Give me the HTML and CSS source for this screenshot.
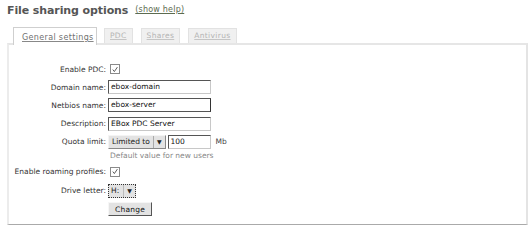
FILE: index.html
```html
<!DOCTYPE html>
<html>
<head>
<meta charset="utf-8">
<link rel="stylesheet" href="styles.css">
</head>
<body>
<div class="page">
  <div class="title-row">
    <h1 class="title">File sharing options</h1>
    <a class="help" href="#">(show help)</a>
  </div>
  <div class="tabs">
    <span class="tab active"><u>General settings</u></span>
    <span class="tab"><u>PDC</u></span>
    <span class="tab"><u>Shares</u></span>
    <span class="tab"><u>Antivirus</u></span>
  </div>
  <div class="panel">
    <div class="form">
      <div class="label r1">Enable PDC:</div>
      <div class="field r1"><span class="check"><svg viewBox="0 0 9 9" width="9" height="9"><path d="M2 4.6 L3.8 6.8 L7.2 1.8" fill="none" stroke="#333" stroke-width="0.9"/></svg></span></div>

      <div class="label r2">Domain name:</div>
      <div class="field r2"><span class="input">ebox-domain</span></div>

      <div class="label r3">Netbios name:</div>
      <div class="field r3"><span class="input dark">ebox-server</span></div>

      <div class="label r4">Description:</div>
      <div class="field r4"><span class="input">EBox PDC Server</span></div>

      <div class="label r5">Quota limit:</div>
      <div class="field r5">
        <span class="select"><span class="sel-text">Limited to</span><span class="sel-btn">▼</span></span>
        <span class="input small">100</span>
        <span class="unit">Mb</span>
      </div>

      <div class="label r6"></div>
      <div class="field r6"><span class="hint">Default value for new users</span></div>

      <div class="label r7">Enable roaming profiles:</div>
      <div class="field r7"><span class="check"><svg viewBox="0 0 9 9" width="9" height="9"><path d="M2 4.6 L3.8 6.8 L7.2 1.8" fill="none" stroke="#333" stroke-width="0.9"/></svg></span></div>

      <div class="label r8">Drive letter:</div>
      <div class="field r8"><span class="select focus"><span class="sel-text">H:</span><span class="sel-btn">▼</span></span></div>

      <div class="label r9"></div>
      <div class="field r9"><button class="btn" type="button">Change</button></div>
    </div>
  </div>
</div>
</body>
</html>
```

FILE: styles.css
```css
html, body {
  margin: 0;
  padding: 0;
  background: #ffffff;
}

.page {
  width: 530px;
  height: 252px;
  font-family: "DejaVu Sans", "Liberation Sans", sans-serif;
  color: #333;
}

.title-row {
  display: flex;
  align-items: baseline;
  padding: 3px 0 0 7px;
  height: 22px;
  box-sizing: border-box;
}

.title {
  margin: 0;
  font-size: 11px;
  font-weight: bold;
  color: #555;
  line-height: 16px;
  letter-spacing: -0.1px;
}

.help {
  margin-left: 7px;
  font-size: 8px;
  color: #5c6b50;
  text-decoration: underline;
  letter-spacing: 0.2px;
  position: relative;
  top: -2px;
}

.tabs {
  display: flex;
  align-items: flex-end;
  padding-left: 13px;
  margin-top: 5px;
  height: 16px;
  position: relative;
  z-index: 2;
}

.tab {
  box-sizing: border-box;
  height: 15px;
  margin-right: 8px;
  padding: 0 5px;
  font-size: 7.5px;
  letter-spacing: 0.35px;
  line-height: 14px;
  color: #b4b4b4;
  background: #f0f0f0;
  border: 1px solid #e2e2e2;
  border-bottom: none;
}

.tab u {
  text-decoration-color: #c4c4c4;
}

.tab.active {
  height: 18px;
  margin-bottom: -2px;
  width: 84px;
  padding: 0 0 0 8px;
  margin-right: 7px;
  background: #fff;
  border-color: #cfcfcf;
  color: #707070;
  font-size: 8px;
  line-height: 19px;
}

.tab.active u {
  text-decoration-color: #888;
}

.panel {
  box-sizing: border-box;
  margin-left: 7px;
  width: 521px;
  height: 182px;
  border-top: 2px solid #e6e6e6;
  border-left: 2px solid #ececec;
  border-right: 2px solid #e4e4e4;
  border-bottom: 1px solid #aaa;
  padding-top: 15px;
  position: relative;
  z-index: 1;
}

.form {
  display: grid;
  grid-template-columns: 97px auto;
  column-gap: 2px;
  grid-template-rows: 18px 18px 18.5px 18.5px 17px 11px 21px 17px 20px;
  font-size: 7.5px;
}

.label {
  display: flex;
  align-items: center;
  justify-content: flex-end;
  color: #333;
  white-space: nowrap;
}

.field {
  display: flex;
  align-items: center;
}

.check {
  box-sizing: border-box;
  width: 10px;
  height: 10px;
  margin-left: 2px;
  border: 1px solid #8a8a8a;
  background: #fff;
  display: flex;
  align-items: center;
  justify-content: center;
}

.check svg {
  display: block;
}

.input {
  box-sizing: border-box;
  display: block;
  width: 103px;
  height: 14px;
  padding: 0 2px;
  line-height: 12px;
  font-size: 7.5px;
  color: #111;
  background: #fff;
  border-top: 1px solid #555;
  border-left: 1px solid #555;
  border-right: 1px solid #c8c8c8;
  border-bottom: 1px solid #c8c8c8;
}

.input.dark {
  border-right-color: #333;
  border-bottom-color: #555;
}

.input.small {
  width: 43px;
  margin-left: 2px;
}

.unit {
  margin-left: 5px;
  color: #444;
}

.select {
  box-sizing: border-box;
  display: flex;
  align-items: stretch;
  height: 14px;
  background: #e3e3e3;
  border-top: 1px solid #f4f4f4;
  border-left: 1px solid #f4f4f4;
  border-right: 1px solid #888;
  border-bottom: 1px solid #888;
  color: #222;
}

.sel-text {
  padding: 0 3px 0 3px;
  line-height: 12px;
}

.sel-btn {
  font-size: 6px;
  line-height: 12px;
  padding: 0 3px;
  border-left: 1px solid #aaa;
  color: #222;
}

.select.focus {
  border: 1px dotted #333;
}

.select.focus .sel-text {
  padding: 0 4px 0 2px;
}

.select.focus .sel-btn {
  border-left: 1px solid #bbb;
}

.hint {
  color: #888;
  padding-left: 2px;
  line-height: 10px;
}

.btn {
  box-sizing: border-box;
  width: 44px;
  height: 14px;
  margin: 0;
  padding: 0;
  font-family: "DejaVu Sans", "Liberation Sans", sans-serif;
  font-size: 7.5px;
  letter-spacing: 0.2px;
  color: #111;
  background: #e3e3e3;
  border-top: 1px solid #f6f6f6;
  border-left: 1px solid #f6f6f6;
  border-right: 1px solid #555;
  border-bottom: 1px solid #555;
}
```
